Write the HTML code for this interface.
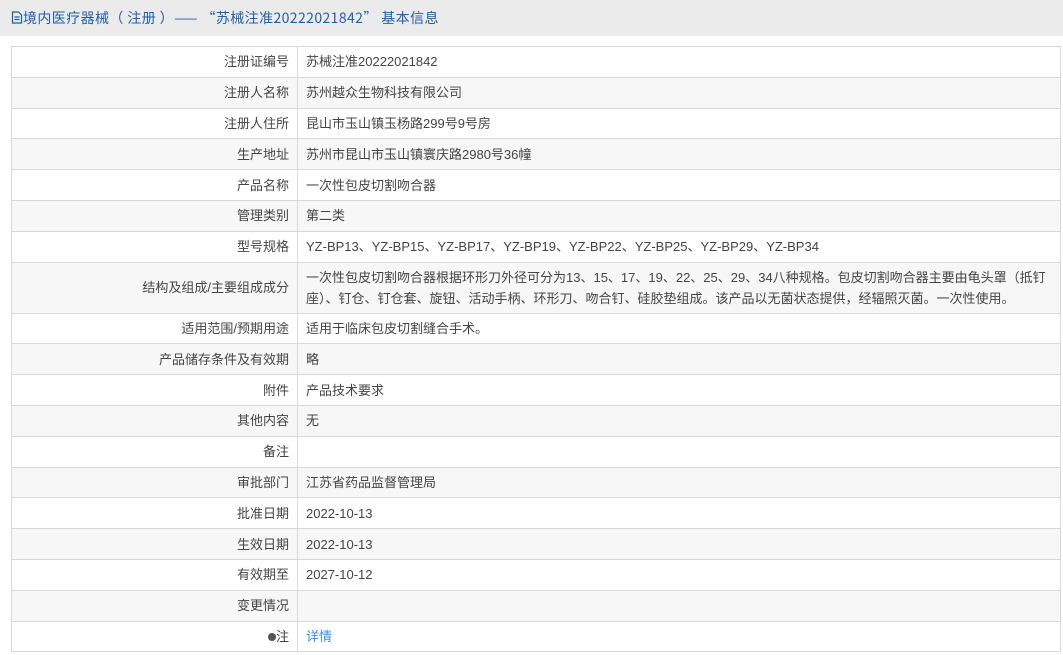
<!DOCTYPE html>
<html><head><meta charset="utf-8"><style>
body{margin:0;background:#fff;font-family:"Liberation Sans","Noto Sans CJK SC",sans-serif;font-size:13px;color:#444;width:1063px;height:655px;overflow:hidden}
.hd{height:36px;background:#ebebeb;color:#1f5ea8;font-size:14px;line-height:36px;padding-left:11px;font-family:"Noto Sans CJK SC",sans-serif;white-space:nowrap;letter-spacing:0.4px}
table{position:absolute;left:11px;top:46px;width:1050px;border-collapse:collapse}
td{border:1px solid #d9d9d9;height:29.8px;padding:0 8px;line-height:21px}
td.l{width:269px;text-align:right}
tr:nth-child(even){background:#f7f7f7}
td.t{height:50px}
a{color:#3a8ee6;text-decoration:none}
</style></head><body>
<div class="hd"><svg width="12" height="13" viewBox="0 0 12 13" style="vertical-align:-1px"><path d="M1.5 1h6l3 3v8h-9z M3.5 6h5M3.5 8.5h5" fill="none" stroke="#1f5ea8" stroke-width="1.2"/></svg>境内医疗器械（ 注册 ）—— “苏械注准20222021842” 基本信息</div>
<table>
<tr><td class="l">注册证编号</td><td>苏械注准20222021842</td></tr>
<tr><td class="l">注册人名称</td><td>苏州越众生物科技有限公司</td></tr>
<tr><td class="l">注册人住所</td><td>昆山市玉山镇玉杨路299号9号房</td></tr>
<tr><td class="l">生产地址</td><td>苏州市昆山市玉山镇寰庆路2980号36幢</td></tr>
<tr><td class="l">产品名称</td><td>一次性包皮切割吻合器</td></tr>
<tr><td class="l">管理类别</td><td>第二类</td></tr>
<tr><td class="l">型号规格</td><td>YZ-BP13、YZ-BP15、YZ-BP17、YZ-BP19、YZ-BP22、YZ-BP25、YZ-BP29、YZ-BP34</td></tr>
<tr><td class="l t">结构及组成/主要组成成分</td><td class="t">一次性包皮切割吻合器根据环形刀外径可分为13、15、17、19、22、25、29、34八种规格。包皮切割吻合器主要由龟头罩（抵钉座）、钉仓、钉仓套、旋钮、活动手柄、环形刀、吻合钉、硅胶垫组成。该产品以无菌状态提供，经辐照灭菌。一次性使用。</td></tr>
<tr><td class="l">适用范围/预期用途</td><td>适用于临床包皮切割缝合手术。</td></tr>
<tr><td class="l">产品储存条件及有效期</td><td>略</td></tr>
<tr><td class="l">附件</td><td>产品技术要求</td></tr>
<tr><td class="l">其他内容</td><td>无</td></tr>
<tr><td class="l">备注</td><td></td></tr>
<tr><td class="l">审批部门</td><td>江苏省药品监督管理局</td></tr>
<tr><td class="l">批准日期</td><td>2022-10-13</td></tr>
<tr><td class="l">生效日期</td><td>2022-10-13</td></tr>
<tr><td class="l">有效期至</td><td>2027-10-12</td></tr>
<tr><td class="l">变更情况</td><td></td></tr>
<tr><td class="l"><span style="display:inline-block;width:8px;height:8px;border-radius:50%;background:#555;vertical-align:0"></span>注</td><td><a>详情</a></td></tr>
</table>
</body></html>
